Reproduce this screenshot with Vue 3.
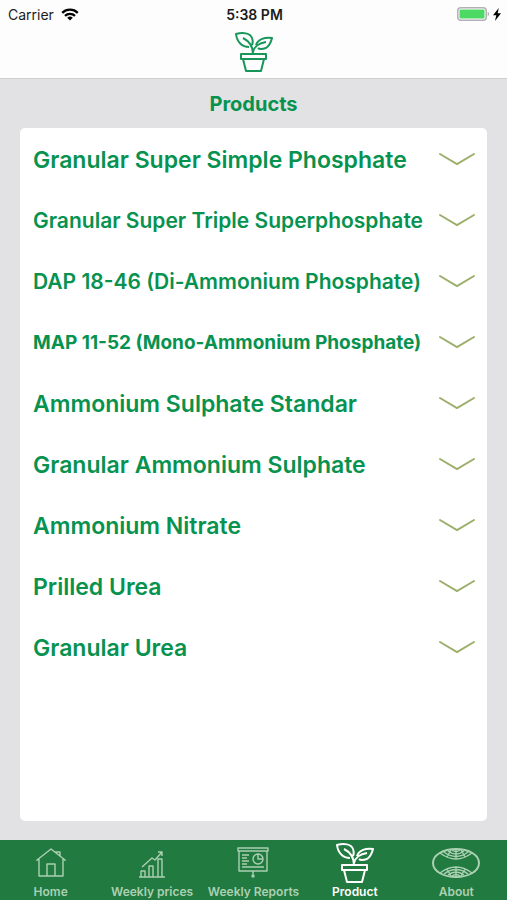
<template>
  <div class="screen">
    <header class="header">
      <div class="status">
        <div class="carrier">
          <span>Carrier</span>
          <svg class="wifi" viewBox="0 0 18 13" aria-hidden="true">
            <path d="M1.2 4.8a11.2 11.2 0 0 1 15.6 0M4 7.8a7.2 7.2 0 0 1 10 0" fill="none" stroke="#000" stroke-width="2.3" />
            <path d="M9 12.6 6.2 9.8a4 4 0 0 1 5.6 0z" />
          </svg>
        </div>
        <span class="time">5:38 PM</span>
        <div class="power">
          <svg class="battery" viewBox="0 0 33 14" aria-hidden="true">
            <rect x="0.8" y="0.8" width="28.4" height="12.4" rx="3" fill="#fff" stroke="#b2b0b4" stroke-width="1.5" />
            <rect x="2.5" y="2.5" width="25" height="9" rx="1" fill="#4cd964" />
            <path d="M30.7 4.6q3 2.4 0 4.8z" fill="#b2b0b4" />
          </svg>
          <svg class="bolt" viewBox="0 0 8 13" aria-hidden="true">
            <path d="M5.8 0 0 7.2h3.3L2 13l6-7.7H4.6z" />
          </svg>
        </div>
      </div>
      <svg class="logo" viewBox="0 0 38 40" aria-hidden="true">
        <path :d="plantPath" />
      </svg>
    </header>

    <main class="content">
      <h1>Products</h1>
      <ul class="card">
        <li v-for="product in products" :key="product.name">
          <button
            type="button"
            class="product"
            :class="product.size"
            :aria-pressed="selected === product.name"
            @click="toggle(product.name)"
          >
            <span>{{ product.name }}</span>
            <svg class="chevron" viewBox="0 0 38 14" aria-hidden="true">
              <path d="M2 2 19 12 36 2" />
            </svg>
          </button>
        </li>
      </ul>
    </main>

    <nav class="tabs">
      <a
        v-for="tab in tabs"
        :key="tab.label"
        href="#"
        :class="{ active: tab.label === activeTab }"
        @click.prevent="activeTab = tab.label"
      >
        <svg :class="tab.icon" :viewBox="tab.viewBox" aria-hidden="true">
          <path :d="tab.path" />
          <path v-if="tab.detail" class="detail" :d="tab.detail" />
        </svg>
        <span>{{ tab.label }}</span>
      </a>
    </nav>
  </div>
</template>

<script setup>
import { ref } from 'vue'

const selected = ref(null)
const activeTab = ref('Product')

const products = [
  { name: 'Granular Super Simple Phosphate', size: 'large' },
  { name: 'Granular Super Triple Superphosphate', size: 'medium' },
  { name: 'DAP 18-46 (Di-Ammonium Phosphate)', size: 'medium' },
  { name: 'MAP 11-52 (Mono-Ammonium Phosphate)', size: 'small' },
  { name: 'Ammonium Sulphate Standar', size: 'large' },
  { name: 'Granular Ammonium Sulphate', size: 'large' },
  { name: 'Ammonium Nitrate', size: 'large' },
  { name: 'Prilled Urea', size: 'large' },
  { name: 'Granular Urea', size: 'large' },
]

// leaves and stem, then the rim and body of the pot
const plantPath =
  'M14 15C7 15 2 10 1 2C8 0 15 1 17 6C18 9 18 11 17 13M8 6C14 9 18 14 18 22' +
  'M23 16C25 18 28 17 31 16C34 14 36 10 37 6C30 5 23 7 21 13M31 10C24 11 19 15 18 20' +
  'M6 22h25v5H6zM8 27l3 12h15l3-12'

const tabs = [
  {
    label: 'Home',
    icon: 'home',
    viewBox: '0 0 30 30',
    path: 'M1 13v-1L15 1l14 11v1M3 11v17h24V11M11 28V16h8v12M20 5V4h4v4',
  },
  {
    label: 'Weekly prices',
    icon: 'chart',
    viewBox: '0 0 26 28',
    path: 'M0 27h26M2 27v-6h4v6M10 27V16h4v11M19 27V9h4v18M3 17l10-9 3 2 7-8M19 2h4v4',
  },
  {
    label: 'Weekly Reports',
    icon: 'report',
    viewBox: '0 0 32 32',
    path:
      'M1 1h30v3H1zM2 4v20h28V4M16 24v5M16 28a1 1 0 1 0 0 2 1 1 0 0 0 0-2' +
      'M5 8h7M5 11h5M5 14h7M5 17h5M5 20h22M21 7a5 5 0 1 0 0 10 5 5 0 1 0 0-10v5h5',
  },
  { label: 'Product', icon: 'plant', viewBox: '0 0 38 40', path: plantPath },
  {
    label: 'About',
    icon: 'globe',
    viewBox: '0 0 48 30',
    path:
      'M24 1c13 0 23 6 23 14s-10 14-23 14S1 23 1 15 11 1 24 1z',
    detail:
      'M8 5q16 12 32 0M12 4q12 9 24 0M16 3q8 6 16 0M20 2q4 3 8 0M24 2v9M19 2l-4 7M29 2l4 7' +
      'M8 25q16-12 32 0M12 26q12-9 24 0M16 27q8-6 16 0M20 28q4-3 8 0M24 28v-9M19 28l-4-7M29 28l4-7',
  },
]

const toggle = (name) => {
  selected.value = selected.value === name ? null : name
}
</script>

<style>
body {
  margin: 0;
}
</style>

<style scoped>
.screen {
  display: flex;
  flex-direction: column;
  min-height: 100vh;
  background: #e2e2e4;
  font-family: Inter, "Liberation Sans", sans-serif;
}
.header {
  display: flex;
  flex-direction: column;
  align-items: center;
  height: 78px;
  border-bottom: 1px solid #cfcfd1;
  background: #fdfdfd;
}
.status {
  display: grid;
  grid-template-columns: 1fr auto 1fr;
  align-items: center;
  box-sizing: border-box;
  width: 100%;
  height: 28px;
  padding: 0 6px 0 8px;
  color: #1c1c1c;
  font-size: 14px;
}
.carrier,
.power {
  display: flex;
  align-items: center;
  gap: 7px;
}
.power {
  justify-content: flex-end;
  gap: 3px;
}
.wifi {
  width: 18px;
  height: 13px;
}
.time {
  font-weight: 600;
}
.battery {
  width: 33px;
  height: 14px;
}
.bolt {
  width: 8px;
  height: 13px;
}
.logo {
  width: 38px;
  height: 40px;
  margin-top: 4px;
  fill: none;
  stroke: #17965a;
  stroke-width: 2;
  stroke-linejoin: round;
}
.content {
  display: flex;
  flex: 1;
  flex-direction: column;
  padding: 0 20px 19px;
}
h1 {
  height: 49px;
  margin: 0;
  color: #07924f;
  font-size: 20px;
  font-weight: 700;
  line-height: 51px;
  text-align: center;
}
.card {
  flex: 1;
  margin: 0;
  padding: 0;
  border-radius: 5px;
  background: #fff;
  list-style: none;
}
.product {
  display: flex;
  align-items: center;
  justify-content: space-between;
  width: 100%;
  height: 61px;
  padding: 0 11px 0 13px;
  border: 0;
  background: none;
  color: #07924f;
  font-family: inherit;
  font-weight: 600;
  text-align: left;
  white-space: nowrap;
  cursor: pointer;
}
.product span {
  padding-top: 2px;
}
.large {
  font-size: 23px;
}
.medium {
  font-size: 21px;
}
.small {
  font-size: 19px;
  font-weight: 700;
}
.chevron {
  flex: none;
  width: 38px;
  height: 14px;
  fill: none;
  stroke: #9bae6a;
  stroke-width: 2;
  stroke-linecap: round;
}
.tabs {
  display: grid;
  grid-template-columns: repeat(5, 1fr);
  height: 60px;
  background: #217a40;
}
.tabs a {
  display: flex;
  flex-direction: column;
  align-items: center;
  justify-content: flex-end;
  color: #acd0b2;
  font-size: 12px;
  font-weight: 600;
  line-height: 16px;
  text-decoration: none;
  white-space: nowrap;
}
.tabs a.active {
  color: #fff;
}
.tabs svg {
  margin-bottom: 6px;
  fill: none;
  stroke: currentColor;
  stroke-width: 1.4;
  stroke-linejoin: round;
}
.tabs .home {
  width: 30px;
  height: 30px;
}
.tabs .chart {
  width: 26px;
  height: 28px;
}
.tabs .report {
  width: 32px;
  height: 32px;
  margin-bottom: 5px;
}
.tabs .plant {
  width: 38px;
  height: 40px;
  margin-bottom: 1px;
  stroke-width: 2;
}
.tabs .globe {
  width: 48px;
  height: 30px;
  stroke-width: 2;
}
.tabs .detail {
  stroke-width: 1.4;
}
</style>
